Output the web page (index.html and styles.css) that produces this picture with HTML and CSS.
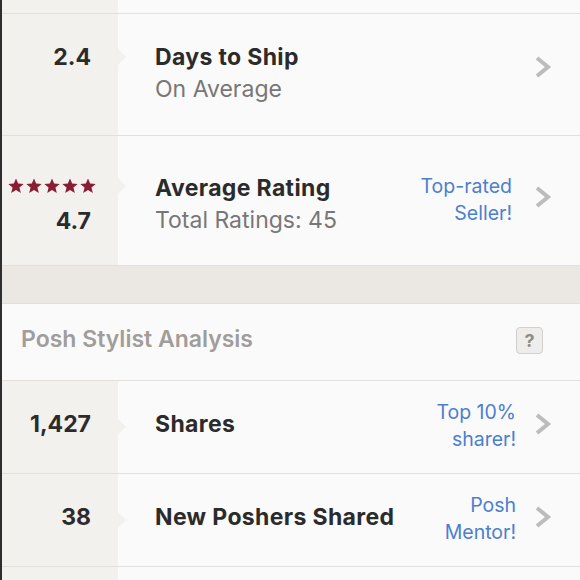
FILE: index.html
```html
<!DOCTYPE html>
<html>
<head>
<meta charset="utf-8">
<link rel="stylesheet" href="styles.css">
</head>
<body>
<div class="page">
  <div class="row row-top">
    <div class="left"></div>
    <div class="main"></div>
  </div>

  <div class="row row-ship">
    <div class="left notch"><span class="num">2.4</span></div>
    <div class="main">
      <div class="text">
        <div class="title">Days to Ship</div>
        <div class="sub">On Average</div>
      </div>
      <svg class="chev" viewBox="0 0 18 24" width="18" height="24"><path d="M3 3 L14 12 L3 21" fill="none" stroke="#bcbcbc" stroke-width="4"/></svg>
    </div>
  </div>

  <div class="row row-rating">
    <div class="left notch">
      <div class="stars">
        <svg viewBox="0 0 20 20" width="16" height="16"><path d="M10 0.5 L12.7 7 L19.6 7.4 L14.3 11.8 L16 18.8 L10 15 L4 18.8 L5.7 11.8 L0.4 7.4 L7.3 7 Z" fill="#8a1d31"/></svg>
        <svg viewBox="0 0 20 20" width="16" height="16"><path d="M10 0.5 L12.7 7 L19.6 7.4 L14.3 11.8 L16 18.8 L10 15 L4 18.8 L5.7 11.8 L0.4 7.4 L7.3 7 Z" fill="#8a1d31"/></svg>
        <svg viewBox="0 0 20 20" width="16" height="16"><path d="M10 0.5 L12.7 7 L19.6 7.4 L14.3 11.8 L16 18.8 L10 15 L4 18.8 L5.7 11.8 L0.4 7.4 L7.3 7 Z" fill="#8a1d31"/></svg>
        <svg viewBox="0 0 20 20" width="16" height="16"><path d="M10 0.5 L12.7 7 L19.6 7.4 L14.3 11.8 L16 18.8 L10 15 L4 18.8 L5.7 11.8 L0.4 7.4 L7.3 7 Z" fill="#8a1d31"/></svg>
        <svg viewBox="0 0 20 20" width="16" height="16"><path d="M10 0.5 L12.7 7 L19.6 7.4 L14.3 11.8 L16 18.8 L10 15 L4 18.8 L5.7 11.8 L0.4 7.4 L7.3 7 Z" fill="#8a1d31"/></svg>
      </div>
      <span class="num">4.7</span>
    </div>
    <div class="main">
      <div class="text">
        <div class="title">Average Rating</div>
        <div class="sub">Total Ratings: 45</div>
      </div>
      <div class="badge">Top-rated<br>Seller!</div>
      <svg class="chev" viewBox="0 0 18 24" width="18" height="24"><path d="M3 3 L14 12 L3 21" fill="none" stroke="#bcbcbc" stroke-width="4"/></svg>
    </div>
  </div>

  <div class="band"></div>

  <div class="section-head">
    <span class="section-title">Posh Stylist Analysis</span>
    <span class="help">?</span>
  </div>

  <div class="row row-stat">
    <div class="left notch"><span class="num">1,427</span></div>
    <div class="main">
      <div class="text"><div class="title">Shares</div></div>
      <div class="badge">Top 10%<br>sharer!</div>
      <svg class="chev" viewBox="0 0 18 24" width="18" height="24"><path d="M3 3 L14 12 L3 21" fill="none" stroke="#bcbcbc" stroke-width="4"/></svg>
    </div>
  </div>

  <div class="row row-stat">
    <div class="left notch"><span class="num">38</span></div>
    <div class="main">
      <div class="text"><div class="title">New Poshers Shared</div></div>
      <div class="badge">Posh<br>Mentor!</div>
      <svg class="chev" viewBox="0 0 18 24" width="18" height="24"><path d="M3 3 L14 12 L3 21" fill="none" stroke="#bcbcbc" stroke-width="4"/></svg>
    </div>
  </div>

  <div class="row row-tail">
    <div class="left"></div>
    <div class="main"></div>
  </div>
</div>
</body>
</html>
```

FILE: styles.css
```css
html, body {
  margin: 0;
  padding: 0;
  background: #fbfafa;
}
.page {
  width: 580px;
  height: 580px;
  overflow: hidden;
  border-left: 2px solid #2e2e2e;
  box-sizing: border-box;
  font-family: "Inter", "Open Sans", sans-serif;
  color: #2b2b2b;
}
.row {
  display: flex;
  border-bottom: 1px solid #e2dfdc;
}
.left {
  width: 116px;
  flex: none;
  background: #f3f1ee;
  box-sizing: border-box;
  padding-right: 27px;
  display: flex;
  flex-direction: column;
  align-items: flex-end;
  position: relative;
}
.notch::after {
  content: "";
  position: absolute;
  right: -8px;
  top: var(--notch-top, 50%);
  margin-top: -8px;
  border-left: 8px solid #f3f1ee;
  border-top: 8px solid transparent;
  border-bottom: 8px solid transparent;
}
.main {
  flex: 1;
  display: flex;
  align-items: center;
  padding-left: 37px;
  padding-right: 28px;
  background: #fbfafa;
}
.text { flex: 1; }
.title {
  font-weight: 700;
  font-size: 23px;
  line-height: 32px;
  letter-spacing: 0.35px;
  color: #2b2b2b;
}
.sub {
  font-size: 23px;
  line-height: 33px;
  color: #777;
}
.num {
  font-weight: 700;
  font-size: 23px;
  line-height: 32px;
  color: #2b2b2b;
}
.badge {
  text-align: right;
  color: #4a80cf;
  font-size: 19.5px;
  line-height: 27px;
  margin-right: 18px;
}
.chev { flex: none; }

.row-top { height: 13px; }
.row-ship { height: 121px; }
.row-ship .left { padding-top: 27px; --notch-top: 43px; }
.row-ship .main { align-items: flex-start; padding-top: 27px; }
.row-ship .chev { margin-top: 14px; }

.row-rating { height: 129px; border-bottom: none; }
.row-rating .left { padding-top: 42px; --notch-top: 50px; padding-right: 22px; }
.row-rating .left .num { margin-right: 5px; margin-top: 11px; }
.stars { display: flex; gap: 2px; }
.row-rating .main { align-items: flex-start; padding-top: 36px; }
.row-rating .badge { margin-top: 1px; margin-right: 22px; }
.row-rating .chev { margin-top: 13px; }

.band {
  height: 39px;
  background: #ebe8e4;
  border-top: 1px solid #e2dfdc;
  border-bottom: 1px solid #e2dfdc;
  box-sizing: border-box;
}
.section-head {
  height: 77px;
  display: flex;
  align-items: center;
  padding-left: 19px;
  padding-right: 37px;
  padding-bottom: 6px;
  background: #fbfafa;
  border-bottom: 1px solid #e2dfdc;
  box-sizing: border-box;
}
.section-title {
  flex: 1;
  font-size: 23px;
  font-weight: 600;
  color: #a09d9a;
}
.help {
  width: 25px;
  height: 25px;
  border: 1px solid #d2d0cd;
  border-radius: 4px;
  background: #efedeb;
  color: #8d8d8d;
  font-weight: 700;
  font-size: 18px;
  display: flex;
  align-items: center;
  justify-content: center;
  margin-top: 2px;
}
.row-stat { height: 92px; }
.row-stat .left { justify-content: center; padding-bottom: 6px; }
.row-stat .main { align-items: center; padding-bottom: 6px; }
.row-stat .badge { padding-top: 4px; }
.row-tail { height: 20px; border-bottom: none; }
```
